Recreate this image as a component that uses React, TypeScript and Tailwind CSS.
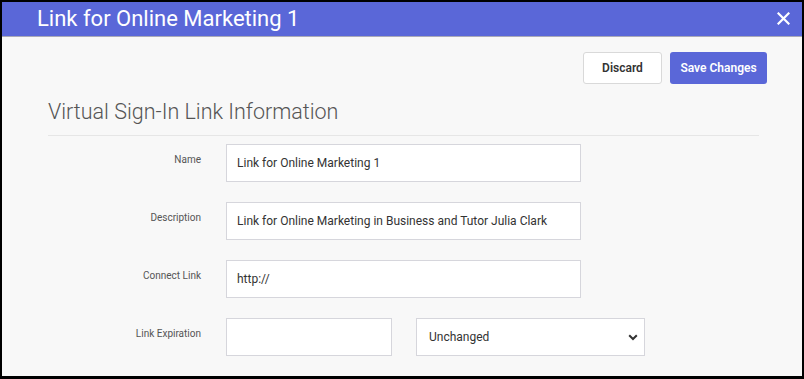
import React from 'react';

const fields = [
  { label: 'Name', value: 'Link for Online Marketing 1' },
  { label: 'Description', value: 'Link for Online Marketing in Business and Tutor Julia Clark' },
  { label: 'Connect Link', value: 'http://' },
];

export default function App() {
  return (
    <div className="w-[804px] h-[379px] bg-black pt-[2px] pl-[2px] pr-[2px] pb-[3px] font-['Roboto',sans-serif]">
      <div className="flex h-full flex-col bg-[#f8f8f8] overflow-hidden">
        {/* Header */}
        <div className="flex h-[35px] shrink-0 items-center justify-between border-b border-[#a9a9b8] bg-[#5a67d8] pl-[35px] pr-[12px]">
          <h1 className="text-[22px] font-normal leading-none text-white">Link for Online Marketing 1</h1>
          <svg width="13" height="13" viewBox="0 0 13 13" className="mb-[2px]">
            <path d="M1.5 1.5 L11.5 11.5 M11.5 1.5 L1.5 11.5" stroke="white" strokeWidth="2.2" strokeLinecap="square" />
          </svg>
        </div>

        {/* Actions */}
        <div className="flex justify-end gap-[8px] pr-[35px] pt-[15px]">
          <button className="h-[32px] w-[79px] rounded-[3px] border border-[#d9d9d9] bg-white text-[12px] font-semibold text-[#333]">
            Discard
          </button>
          <button className="h-[32px] w-[97px] rounded-[3px] bg-[#5a67d8] text-[12px] font-semibold text-white">
            Save Changes
          </button>
        </div>

        <div className="ml-[46px] mr-[43px]">
          <h2 className="mt-[15px] text-[21.5px] font-light leading-[26px] text-[#555]">
            Virtual Sign-In Link Information
          </h2>
          <div className="mt-[10px] h-px bg-[#e6e6e6]" />

          <div className="mt-[8px] flex flex-col gap-[20px]">
            {fields.map((f) => (
              <div key={f.label} className="flex items-start">
                <label className="w-[153px] shrink-0 pt-[8px] text-right text-[10px] text-[#555]">{f.label}</label>
                <div className="ml-[25px] flex h-[38px] w-[355px] items-center border border-[#d6d6dc] bg-white px-[10px] text-[12px] text-[#333]">
                  {f.value}
                </div>
              </div>
            ))}
            <div className="flex items-start">
              <label className="w-[153px] shrink-0 pt-[8px] text-right text-[10px] text-[#555]">Link Expiration</label>
              <div className="ml-[25px] h-[38px] w-[166px] border border-[#d6d6dc] bg-white" />
              <div className="ml-[24px] flex h-[38px] w-[229px] items-center justify-between border border-[#d6d6dc] bg-white pl-[12px] pr-[6px] text-[12px] text-[#333]">
                <span>Unchanged</span>
                <svg width="10" height="7" viewBox="0 0 10 7">
                  <path d="M1.2 1.2 L5 5 L8.8 1.2" fill="none" stroke="#333" strokeWidth="2" />
                </svg>
              </div>
            </div>
          </div>
        </div>
      </div>
    </div>
  );
}
